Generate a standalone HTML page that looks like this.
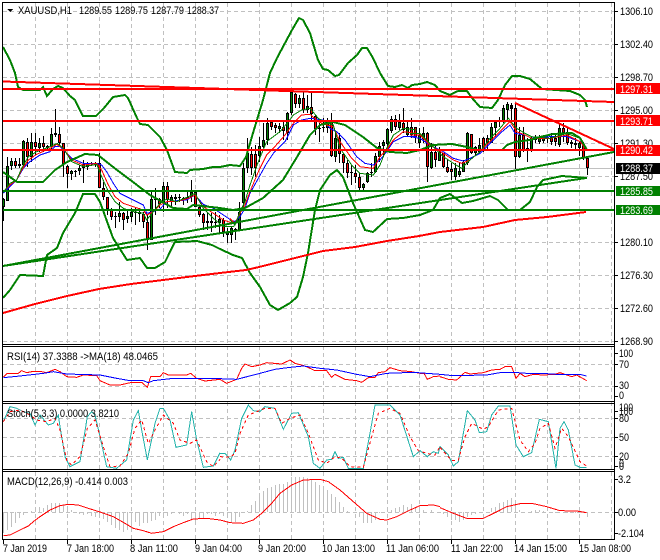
<!DOCTYPE html>
<html><head><meta charset="utf-8"><style>
html,body{margin:0;padding:0;background:#fff;width:660px;height:560px;overflow:hidden}
svg{display:block;position:absolute;left:0;top:0}
text{font-family:"Liberation Sans",sans-serif;font-size:11px;fill:#000}
.c polyline,.c path,.c line,.c rect{shape-rendering:crispEdges}
polyline{fill:none;vector-effect:non-scaling-stroke}
.w text{fill:#fff}
</style></head><body>
<svg class="c" width="660" height="560" viewBox="0 0 660 560">
<rect width="660" height="560" fill="#fff"/>
<!-- grid -->
<path fill="none" stroke="#c0c0c0" stroke-dasharray="4 3" d="M3 11.5H614M3 44.5H614M3 77.5H614M3 110.5H614M3 143.5H614M3 176.5H614M3 209.5H614M3 242.5H614M3 275.5H614M3 308.5H614M3 341.5H614M3 364.5H614M3 386.5H614M3 418.5H614M3 437.5H614M3 456.5H614M3 512.5H614
M35.5 3V539M67.5 3V539M99.5 3V539M131.5 3V539M163.5 3V539M195.5 3V539M227.5 3V539M259.5 3V539M291.5 3V539M323.5 3V539M355.5 3V539M387.5 3V539M419.5 3V539M451.5 3V539M483.5 3V539M515.5 3V539M547.5 3V539M579.5 3V539M611.5 3V539"/>
<path stroke="#c0c0c0" d="M3 168.5H614"/>
<!-- candle wicks -->
<path fill="none" stroke="#000" d="M3.5 198V221M7.5 157V201M11.5 158V170M15.5 158V168M19.5 158V168M23.5 140V167M27.5 138V167M31.5 133V162M35.5 133V155M39.5 138V152M43.5 136V152M47.5 145V150M51.5 128V149M55.5 109V137M59.5 127V146M63.5 143V177M67.5 165V188M71.5 170V180M75.5 170V177M79.5 165V175M83.5 160V183M87.5 162V170M91.5 162V166M95.5 162V167M99.5 153V188M103.5 182V200M107.5 197V215M111.5 208V220M115.5 212V228M119.5 202V222M123.5 212V230M127.5 210V223M131.5 208V222M135.5 208V225M139.5 208V222M143.5 212V228M147.5 214V250M151.5 190V240M155.5 188V215M159.5 198V208M163.5 182V212M167.5 182V208M171.5 195V207M175.5 194V205M179.5 194V202M183.5 197V205M187.5 190V203M191.5 180V202M195.5 190V207M199.5 205V217M203.5 213V230M207.5 213V230M211.5 213V232M215.5 212V228M219.5 215V233M223.5 218V237M227.5 228V243M231.5 227V243M235.5 228V240M239.5 202V230M243.5 163V208M247.5 138V173M251.5 147V175M255.5 145V177M259.5 137V162M263.5 123V148M267.5 118V145M271.5 120V130M275.5 123V133M279.5 123V133M283.5 122V140M287.5 112V140M291.5 92V115M295.5 93V108M299.5 95V108M303.5 92V113M307.5 95V113M311.5 92V122M315.5 115V135M319.5 123V142M323.5 118V132M327.5 118V133M331.5 113V157M335.5 133V162M339.5 133V163M343.5 153V173M347.5 160V178M351.5 165V185M355.5 165V183M359.5 173V190M363.5 183V190M367.5 172V183M371.5 163V177M375.5 153V173M379.5 142V162M383.5 140V155M387.5 128V147M391.5 116V133M395.5 115V130M399.5 114V130M403.5 108V133M407.5 122V137M411.5 118V138M415.5 127V143M419.5 128V148M423.5 127V143M427.5 132V182M431.5 143V169M435.5 145V167M439.5 147V161M443.5 153V168M447.5 160V173M451.5 163V180M455.5 163V180M459.5 163V177M463.5 160V172M467.5 132V165M471.5 134V154M475.5 146V155M479.5 138V153M483.5 137V152M487.5 135V150M491.5 123V143M495.5 120V137M499.5 117V127M503.5 105V123M507.5 102V120M511.5 103V123M515.5 103V169M519.5 127V158M523.5 127V152M527.5 138V162M531.5 137V152M535.5 135V143M539.5 135V144M543.5 135V143M547.5 136V143M551.5 133V145M555.5 135V146M559.5 123V147M563.5 123V142M567.5 128V145M571.5 140V148M575.5 138V150M579.5 141V156M583.5 142V160M587.5 158V175"/>
<!-- candle bodies -->
<path fill="none" stroke="#000" stroke-width="3" d="M3.5 199V207M7.5 166V201M11.5 161V166M15.5 161V166M19.5 164V166M23.5 141V165M27.5 142V157M31.5 142V157M35.5 142V147M39.5 143V148M43.5 143V147M47.5 146V148M51.5 134V147M55.5 133V135M59.5 134V143M63.5 143V164M67.5 166V174M71.5 171V174M75.5 171V172M79.5 168V171M83.5 164V168M87.5 163V167M91.5 163V164M95.5 163V165M99.5 163V188M103.5 188V197M107.5 197V209M111.5 209V217M115.5 216V217M119.5 213V217M123.5 213V220M127.5 216V219M131.5 212V217M135.5 212V213M139.5 212V214M143.5 214V222M147.5 222V240M151.5 199V240M155.5 199V200M159.5 199V204M163.5 186V203M167.5 186V200M171.5 197V202M175.5 197V199M179.5 197V198M183.5 198V200M187.5 197V199M191.5 192V197M195.5 192V207M199.5 207V215M203.5 214V223M207.5 221V223M211.5 221V223M215.5 222V223M219.5 219V223M223.5 220V232M227.5 232V235M231.5 228V235M235.5 229V230M239.5 212V230M243.5 168V203M247.5 153V168M251.5 154V168M255.5 154V168M259.5 146V156M263.5 140V147M267.5 123V140M271.5 122V127M275.5 125V128M279.5 126V129M283.5 127V131M287.5 113V133M291.5 92V113M295.5 94V104M299.5 98V104M303.5 98V110M307.5 106V110M311.5 107V114M315.5 116V129M319.5 128V129M323.5 127V128M327.5 120V128M331.5 120V156M335.5 138V157M339.5 138V154M343.5 154V163M347.5 163V173M351.5 172V173M355.5 173V177M359.5 177V188M363.5 184V188M367.5 173V182M371.5 172V173M375.5 156V172M379.5 146V157M383.5 142V146M387.5 129V144M391.5 119V131M395.5 119V127M399.5 122V128M403.5 123V130M407.5 127V135M411.5 127V135M415.5 127V137M419.5 135V143M423.5 133V139M427.5 133V167M431.5 152V168M435.5 152V160M439.5 152V161M443.5 153V167M447.5 167V172M451.5 169V172M455.5 168V177M459.5 171V175M463.5 162V172M467.5 133V163M471.5 134V153M475.5 147V153M479.5 145V152M483.5 138V150M487.5 138V143M491.5 127V143M495.5 122V128M499.5 120V122M503.5 108V122M507.5 104V110M511.5 105V109M515.5 108V157M519.5 135V157M523.5 135V151M527.5 148V151M531.5 138V150M535.5 137V140M539.5 137V142M543.5 137V141M547.5 138V139M551.5 137V142M555.5 138V142M559.5 128V145M563.5 128V133M567.5 132V143M571.5 142V144M575.5 143V145M579.5 143V148M583.5 145V158M587.5 158V168"/>
<path fill="none" stroke="#f00" d="M15.5 162V165M27.5 143V156M35.5 143V146M43.5 144V146M59.5 135V142M63.5 144V163M67.5 167V173M99.5 164V187M103.5 189V196M107.5 198V208M111.5 210V216M123.5 214V219M143.5 215V221M147.5 223V239M159.5 200V203M167.5 187V199M195.5 193V206M199.5 208V214M203.5 215V222M223.5 221V231M251.5 155V167M255.5 155V167M271.5 123V126M275.5 126V127M283.5 128V130M295.5 95V103M303.5 99V109M311.5 108V113M315.5 117V128M331.5 121V155M339.5 139V153M343.5 155V162M347.5 164V172M355.5 174V176M359.5 178V187M395.5 120V126M403.5 124V129M411.5 128V134M415.5 128V136M427.5 134V166M435.5 153V159M443.5 154V166M447.5 168V171M451.5 170V171M471.5 135V152M483.5 139V149M487.5 139V142M499.5 121V121M515.5 109V156M523.5 136V150M535.5 138V139M551.5 138V141M555.5 139V141M563.5 129V132M567.5 133V142M575.5 144V144M583.5 146V157M587.5 159V167"/>
<path fill="none" stroke="#008000" d="M3.5 200V206M7.5 167V200M11.5 162V165M19.5 165V165M23.5 142V164M31.5 143V156M39.5 144V147M47.5 147V147M51.5 135V146M71.5 172V173M79.5 169V170M83.5 165V167M87.5 164V166M95.5 164V164M119.5 214V216M127.5 217V218M131.5 213V216M139.5 213V213M151.5 200V239M163.5 187V202M171.5 198V201M175.5 198V198M183.5 199V199M187.5 198V198M191.5 193V196M207.5 222V222M211.5 222V222M219.5 220V222M227.5 233V234M231.5 229V234M239.5 213V229M243.5 169V202M247.5 154V167M259.5 147V155M263.5 141V146M267.5 124V139M279.5 127V128M287.5 114V132M291.5 93V112M299.5 99V103M307.5 107V109M327.5 121V127M335.5 139V156M363.5 185V187M367.5 174V181M375.5 157V171M379.5 147V156M383.5 143V145M387.5 130V143M391.5 120V130M399.5 123V127M407.5 128V134M419.5 136V142M423.5 134V138M431.5 153V167M439.5 153V160M455.5 169V176M459.5 172V174M463.5 163V171M467.5 134V162M475.5 148V152M479.5 146V151M491.5 128V142M495.5 123V127M503.5 109V121M507.5 105V109M519.5 136V156M527.5 149V150M531.5 139V149M539.5 138V141M543.5 138V140M559.5 129V144M579.5 144V147"/>
<!-- moving averages (coords from 3x crops) -->
<g transform="translate(0,105) scale(.33333)" stroke-width="1">
<polyline stroke="#00f" points="10,265 30,245 50,225 70,190 90,170 120,150 150,140 165,125 180,125 195,140 215,160 250,175 290,175 305,180 320,200 340,235 360,265 400,285 430,300 440,325 460,320 480,312 500,290 520,288 560,285 585,270 610,298 640,310 670,330 700,350 715,345"/>
<polyline stroke="#f00" points="10,260 30,240 50,225 65,195 85,165 110,148 150,130 170,118 190,130 215,165 250,180 290,175 305,195 325,240 345,275 370,295 400,305 430,315 440,330 460,320 480,300 500,290 530,290 565,280 585,270 610,305 640,325 670,345 700,355 715,350"/>
<polyline stroke="#008000" points="10,262 30,235 50,225 65,190 85,155 110,140 150,125 172,115 190,130 215,170 250,185 290,178 305,215 325,260 345,290 370,310 400,320 430,325 440,345 460,320 480,295 500,282 530,290 565,275 585,265 610,310 640,340 670,365 700,365 715,345"/>
</g>
<g transform="translate(230,85) scale(.33333)" stroke-width="1">
<polyline stroke="#00f" points="0,405 15,410 30,395 45,370 60,325 85,280 110,235 130,205 165,170 190,120 215,105 240,100 280,105 300,130 320,140 345,165 380,215 405,235 430,240 450,225 470,200 490,170 520,155 560,155"/>
<polyline stroke="#f00" points="0,400 15,415 30,385 45,360 60,320 85,260 110,210 130,190 165,150 190,115 215,90 240,88 265,110 290,120 310,125 330,170 365,220 390,245 430,250 450,215 470,195 490,165 520,140 560,145"/>
<polyline stroke="#008000" points="0,405 15,420 30,380 45,350 60,300 85,230 110,170 150,140 175,110 190,90 215,75 240,70 265,100 290,115 310,120 330,190 365,240 390,265 430,270 450,240 470,190 490,150 520,130 560,135"/>
</g>
<g transform="translate(410,95) scale(.33333)" stroke-width="1">
<polyline stroke="#00f" points="0,125 30,130 60,150 100,170 130,190 160,198 180,190 210,175 240,145 270,115 300,90 315,115 345,120 365,130 420,125 470,125 510,140 530,160"/>
<polyline stroke="#f00" points="0,120 30,120 60,150 100,175 130,195 155,205 180,195 210,170 240,140 270,110 300,80 320,110 345,120 365,130 420,130 470,120 510,140 530,165"/>
<polyline stroke="#008000" points="0,115 30,115 60,145 100,185 130,205 155,220 180,195 210,170 240,130 270,100 295,70 320,100 345,115 365,125 420,130 470,115 510,130 530,165"/>
</g>
<!-- bollinger bands -->
<g stroke="#008000" stroke-width="2">
<polyline points="3,47 10,60 15,73 18,87 23,90 40,90 43,87 47,96 53,89 58,86 63,88 70,96 75,100 83,116 96,116 104,108 113,97 125,95 128,98 137,118 140,124 148,125 160,137 167,150 175,172 187,173 190,170 203,169 213,167 220,167 230,165 240,166 246,157 253,133 263,100 270,73 277,58 285,43 292,30 299,18 303,20 310,33 318,60 323,69 328,70 335,76 339,75 348,63 357,55 362,48 367,48 373,58 380,73 388,86 395,87 402,85 408,88 412,85 420,84 427,82 435,85 440,91 450,95 458,91 467,91 472,98 480,107 492,108 498,100 505,85 512,76 520,76 530,79 542,89 570,91 580,95 585,100 587,107"/>
<polyline points="3,172 17,182 43,182 55,170 67,162 85,154 98,155 108,163 117,170 133,182 150,195 173,208 187,209 193,205 220,208 233,210 245,208 263,198 283,180 297,157 310,135 320,125 333,122 345,125 363,137 377,148 390,152 407,153 420,150 433,145 452,144 467,147 478,150 502,150 507,145 515,142 530,140 540,137 553,134 572,133 580,138 587,150"/>
<polyline points="3,298 10,290 20,275 43,276 47,255 57,248 63,233 75,213 83,194 95,194 100,202 113,238 127,260 140,258 147,268 155,268 165,262 175,242 197,241 212,245 220,249 233,255 242,258 250,273 260,287 270,305 278,310 290,303 297,297 303,277 308,253 315,210 320,190 330,175 337,170 343,177 353,203 365,230 373,232 387,219 403,218 420,215 433,210 440,198 450,194 462,203 473,201 490,196 498,200 508,210 520,210 530,202 537,187 543,180 562,176 587,178"/>
</g>
<!-- MA200 -->
<polyline stroke="#f00" stroke-width="2" points="3,313 35,304 67,296 99,289 131,284 163,280 195,276 220,273 246,270 259,267 291,259 323,251 355,247 387,241 419,236 440,232 483,227 515,220 547,217 586,212"/>
<!-- trend lines -->
<path fill="none" stroke="#008000" stroke-width="2" d="M3 266L614 152M3 266L586 178"/>
<path fill="none" stroke="#f00" stroke-width="2" d="M3 81.5L614 102M515 103L614 149"/>
<path fill="none" stroke="#f00" stroke-width="2" d="M3 89H614M3 121H614M3 150H614"/>
<path fill="none" stroke="#008000" stroke-width="2" d="M3 191H614M3 210H614"/>
<!-- RSI -->
<g transform="translate(0,340) scale(.33333)">
<polyline stroke="#f00" points="10,112 22,100 55,100 65,92 80,98 95,95 125,95 140,98 165,88 180,95 200,110 230,112 250,105 290,107 300,122 330,135 360,135 395,127 425,127 442,142 452,110 480,110 490,98 505,105 560,105 572,100 590,115 615,123 660,118"/>
<polyline stroke="#00f" points="10,113 60,108 130,100 160,95 200,102 300,105 350,115 390,122 430,122 445,128 460,122 520,115 660,115"/>
<polyline stroke="#20b2aa" points="10,245 30,200 50,205 70,215 90,220 105,255 120,225 145,255 160,250 175,225 180,260 195,350 210,380 240,365 262,230 275,215 285,225 300,290 320,380 350,385 380,360 400,240 415,212 425,270 442,360 465,250 480,205 490,205 510,240 528,322 560,315 575,215 590,300 610,382 640,378 660,338"/>
<polyline stroke="#f00" stroke-dasharray="3 3" points="10,245 30,215 60,210 90,225 110,240 140,245 165,235 180,270 200,360 215,375 240,350 262,265 285,240 310,320 330,380 360,378 385,340 405,265 425,240 445,310 465,270 490,225 520,250 540,300 570,310 590,300 620,365 640,380 660,358"/>
</g>
<g transform="translate(220,340) scale(.33333)">
<polyline stroke="#f00" points="0,118 20,130 50,118 65,85 75,72 95,80 120,75 140,68 185,72 210,60 225,70 255,78 285,92 320,92 335,112 345,103 375,118 410,122 425,127 445,113 465,112 475,98 495,95 510,83 540,92 575,95 600,100 612,100 622,118 640,110 660,108"/>
<polyline stroke="#00f" points="0,116 50,118 120,100 165,88 210,82 250,78 300,85 350,90 410,103 450,110 500,100 580,97 660,103"/>
<polyline stroke="#20b2aa" points="0,340 15,340 32,360 45,330 65,235 85,195 100,212 120,215 135,200 165,205 190,268 215,220 235,218 265,290 280,370 300,385 320,360 335,358 345,335 355,355 370,352 385,385 430,385 450,280 465,195 510,195 540,225 580,350 600,332 622,350 640,335 655,340 660,318"/>
<polyline stroke="#f00" stroke-dasharray="3 3" points="0,350 30,352 45,340 60,280 85,225 110,215 135,205 165,205 185,250 210,235 240,225 265,280 295,360 320,370 345,350 365,355 390,380 430,382 455,290 475,220 510,205 540,220 570,290 595,332 620,340 645,345 660,320"/>
</g>
<g transform="translate(440,340) scale(.33333)">
<polyline stroke="#f00" points="0,110 25,118 50,120 75,97 90,102 130,98 155,90 180,88 195,80 215,80 228,115 240,100 255,110 280,103 310,105 345,103 360,98 395,110 410,105 440,122"/>
<polyline stroke="#00f" points="0,103 40,107 140,105 180,98 220,97 260,100 320,101 350,103 420,103 440,108"/>
<polyline stroke="#20b2aa" points="0,320 25,345 40,378 55,365 82,212 105,240 118,278 140,275 155,225 175,198 210,198 228,315 250,350 275,338 298,238 325,245 348,385 360,265 372,245 385,270 405,375 420,382 440,382"/>
<polyline stroke="#f00" stroke-dasharray="3 3" points="0,322 35,362 55,360 75,290 95,250 130,268 145,260 175,210 215,205 240,300 265,335 285,310 300,265 325,250 345,325 365,265 385,290 420,365 440,378"/>
</g>
<!-- MACD histogram -->
<path fill="none" stroke="#c0c0c0" d="M3.5 512V533M7.5 512V530M11.5 512V527M15.5 512V523M19.5 512V518M23.5 512V515M27.5 512V513M31.5 512V511M35.5 512V510M39.5 512V507M43.5 512V508M47.5 512V505M51.5 512V503M55.5 512V503M59.5 512V503M63.5 512V505M67.5 512V506M71.5 512V510M79.5 512V514M83.5 512V515M87.5 512V514M91.5 512V516M95.5 512V517M99.5 512V517M103.5 512V519M107.5 512V522M111.5 512V525M115.5 512V528M119.5 512V530M123.5 512V532M127.5 512V530M131.5 512V527M135.5 512V522M139.5 512V526M143.5 512V523M147.5 512V523M151.5 512V521M155.5 512V520M159.5 512V516M163.5 512V514M167.5 512V516M171.5 512V514M179.5 512V514M183.5 512V516M187.5 512V514M191.5 512V519M195.5 512V521M199.5 512V519M203.5 512V518M207.5 512V514M211.5 512V514M215.5 512V516M219.5 512V514M223.5 512V516M227.5 512V518M231.5 512V523M235.5 512V522M239.5 512V517M243.5 512V513M247.5 512V511M251.5 512V505M255.5 512V501M259.5 512V497M263.5 512V491M267.5 512V488M271.5 512V487M275.5 512V485M279.5 512V484M283.5 512V484M287.5 512V482M291.5 512V477M295.5 512V477M299.5 512V477M303.5 512V477M307.5 512V478M311.5 512V480M315.5 512V482M319.5 512V485M323.5 512V487M327.5 512V490M331.5 512V494M335.5 512V497M339.5 512V502M343.5 512V507M347.5 512V511M355.5 512V513M359.5 512V517M363.5 512V523M367.5 512V523M371.5 512V523M375.5 512V520M379.5 512V513M387.5 512V510M391.5 512V510M395.5 512V508M399.5 512V507M403.5 512V505M407.5 512V507M411.5 512V504M415.5 512V507M419.5 512V508M423.5 512V510M431.5 512V510M443.5 512V514M447.5 512V517M451.5 512V520M455.5 512V520M459.5 512V522M463.5 512V520M467.5 512V517M471.5 512V515M475.5 512V514M491.5 512V508M495.5 512V507M499.5 512V503M503.5 512V502M507.5 512V500M511.5 512V498M515.5 512V505M519.5 512V510M531.5 512V511M535.5 512V510M539.5 512V510M543.5 512V511M555.5 512V513M567.5 512V513M575.5 512V513M583.5 512V513M587.5 512V517"/>
<g transform="translate(0,340) scale(.33333)"><polyline stroke="#f00" points="10,587 30,585 60,570 85,558 100,545 120,530 150,510 180,497 205,493 235,495 265,505 300,516 340,530 375,550 400,565 430,572 455,580 490,575 520,560 550,548 580,537 620,535 660,540"/></g>
<g transform="translate(220,340) scale(.33333)"><polyline stroke="#f00" points="0,540 30,548 70,550 100,540 125,520 155,490 180,460 215,435 250,420 300,418 325,425 360,450 400,485 440,520 480,538 500,540 530,530 570,510 600,497 640,495 660,500"/></g>
<g transform="translate(440,340) scale(.33333)"><polyline stroke="#f00" points="0,503 35,518 80,535 130,535 165,518 200,500 245,490 275,490 320,500 360,512 410,513 440,518"/></g>
<!-- frames -->
<path fill="none" stroke="#000" d="M2.5 2.5H614.5V539.5H2.5ZM3 344.5H614M3 346.5H614M3 401.5H614M3 403.5H614M3 469.5H614M3 471.5H614"/>
<!-- ticks -->
<path fill="none" stroke="#000" d="M615 11.5h3M615 44.5h3M615 77.5h3M615 110.5h3M615 143.5h3M615 176.5h3M615 242.5h3M615 275.5h3M615 308.5h3M615 341.5h3M615 353.5h3M615 364.5h3M615 386.5h3M615 396.5h3M615 411.5h3M615 418.5h3M615 437.5h3M615 456.5h3M615 466.5h3M615 479.5h3M615 512.5h3M615 533.5h3M3.5 540v4M67.5 540v4M131.5 540v4M195.5 540v4M259.5 540v4M323.5 540v4M387.5 540v4M451.5 540v4M515.5 540v4M579.5 540v4"/>
<!-- price tags -->
<rect x="616" y="83" width="44" height="11" fill="#f00"/>
<rect x="616" y="115" width="44" height="11" fill="#f00"/>
<rect x="616" y="145" width="44" height="11" fill="#f00"/>
<rect x="616" y="163" width="44" height="11" fill="#000"/>
<rect x="616" y="186" width="44" height="10" fill="#008000"/>
<rect x="616" y="205" width="44" height="10" fill="#008000"/>
<path d="M7 9h6l-3 3z" fill="#000"/>
</svg>
<svg width="660" height="560" viewBox="0 0 660 560">
<g lengthAdjust="spacingAndGlyphs">
<text x="18" y="14" textLength="54" lengthAdjust="spacingAndGlyphs">XAUUSD,H1</text>
<text x="79" y="14" textLength="33" lengthAdjust="spacingAndGlyphs">1289.55</text>
<text x="115" y="14" textLength="33" lengthAdjust="spacingAndGlyphs">1289.75</text>
<text x="151" y="14" textLength="33" lengthAdjust="spacingAndGlyphs">1287.79</text>
<text x="187" y="14" textLength="32" lengthAdjust="spacingAndGlyphs">1288.37</text>
<text x="620" y="15" textLength="33" lengthAdjust="spacingAndGlyphs">1306.10</text>
<text x="620" y="48" textLength="33" lengthAdjust="spacingAndGlyphs">1302.40</text>
<text x="620" y="81" textLength="33" lengthAdjust="spacingAndGlyphs">1298.70</text>
<text x="620" y="114" textLength="33" lengthAdjust="spacingAndGlyphs">1295.00</text>
<text x="620" y="147" textLength="33" lengthAdjust="spacingAndGlyphs">1291.30</text>
<text x="620" y="180" textLength="33" lengthAdjust="spacingAndGlyphs">1287.50</text>
<text x="620" y="246" textLength="33" lengthAdjust="spacingAndGlyphs">1280.10</text>
<text x="620" y="279" textLength="33" lengthAdjust="spacingAndGlyphs">1276.30</text>
<text x="620" y="312" textLength="33" lengthAdjust="spacingAndGlyphs">1272.60</text>
<text x="620" y="345" textLength="33" lengthAdjust="spacingAndGlyphs">1268.90</text>
</g>
</svg>
<svg width="660" height="560" viewBox="0 0 660 560">
<rect x="616" y="83" width="44" height="11" fill="#f00"/>
<rect x="616" y="115" width="44" height="11" fill="#f00"/>
<rect x="616" y="145" width="44" height="11" fill="#f00"/>
<rect x="616" y="163" width="44" height="11" fill="#000"/>
<rect x="616" y="186" width="44" height="10" fill="#008000"/>
<rect x="616" y="205" width="44" height="10" fill="#008000"/>
<g class="w">
<text x="620" y="93" textLength="33" lengthAdjust="spacingAndGlyphs">1297.31</text>
<text x="620" y="125" textLength="33" lengthAdjust="spacingAndGlyphs">1293.71</text>
<text x="620" y="154" textLength="33" lengthAdjust="spacingAndGlyphs">1290.42</text>
<text x="620" y="172" textLength="33" lengthAdjust="spacingAndGlyphs">1288.37</text>
<text x="620" y="195" textLength="33" lengthAdjust="spacingAndGlyphs">1285.85</text>
<text x="620" y="214" textLength="33" lengthAdjust="spacingAndGlyphs">1283.69</text>
</g>
<text x="7" y="360" textLength="151" lengthAdjust="spacingAndGlyphs">RSI(14) 37.3388  -&gt;MA(18) 48.0465</text>
<text x="7" y="417" textLength="112" lengthAdjust="spacingAndGlyphs">Stoch(5,3,3) 0.0000 3.8210</text>
<text x="7" y="485" textLength="121" lengthAdjust="spacingAndGlyphs">MACD(12,26,9) -0.414 0.003</text>
<text x="619" y="357" textLength="14" lengthAdjust="spacingAndGlyphs">100</text>
<text x="619" y="368" textLength="10" lengthAdjust="spacingAndGlyphs">70</text>
<text x="619" y="389" textLength="10" lengthAdjust="spacingAndGlyphs">30</text>
<text x="619" y="399" textLength="5" lengthAdjust="spacingAndGlyphs">0</text>
<text x="619" y="411" textLength="14" lengthAdjust="spacingAndGlyphs">100</text>
<text x="619" y="415" textLength="14" lengthAdjust="spacingAndGlyphs">100</text>
<text x="619" y="422" textLength="10" lengthAdjust="spacingAndGlyphs">80</text>
<text x="619" y="441" textLength="10" lengthAdjust="spacingAndGlyphs">50</text>
<text x="619" y="460" textLength="10" lengthAdjust="spacingAndGlyphs">20</text>
<text x="619" y="467" textLength="5" lengthAdjust="spacingAndGlyphs">0</text>
<text x="619" y="470" textLength="5" lengthAdjust="spacingAndGlyphs">0</text>
<text x="618" y="483" textLength="13" lengthAdjust="spacingAndGlyphs">3.2</text>
<text x="618" y="516" textLength="18" lengthAdjust="spacingAndGlyphs">0.00</text>
<text x="618" y="537" textLength="26" lengthAdjust="spacingAndGlyphs">-2.104</text>
<text x="3" y="552" textLength="44" lengthAdjust="spacingAndGlyphs">7 Jan 2019</text>
<text x="67" y="552" textLength="47" lengthAdjust="spacingAndGlyphs">7 Jan 18:00</text>
<text x="130" y="552" textLength="48" lengthAdjust="spacingAndGlyphs">8 Jan 11:00</text>
<text x="195" y="552" textLength="47" lengthAdjust="spacingAndGlyphs">9 Jan 04:00</text>
<text x="258" y="552" textLength="48" lengthAdjust="spacingAndGlyphs">9 Jan 20:00</text>
<text x="322" y="552" textLength="53" lengthAdjust="spacingAndGlyphs">10 Jan 13:00</text>
<text x="386" y="552" textLength="53" lengthAdjust="spacingAndGlyphs">11 Jan 06:00</text>
<text x="451" y="552" textLength="52" lengthAdjust="spacingAndGlyphs">11 Jan 22:00</text>
<text x="514" y="552" textLength="53" lengthAdjust="spacingAndGlyphs">14 Jan 15:00</text>
<text x="579" y="552" textLength="52" lengthAdjust="spacingAndGlyphs">15 Jan 08:00</text>
</svg>
</body></html>
